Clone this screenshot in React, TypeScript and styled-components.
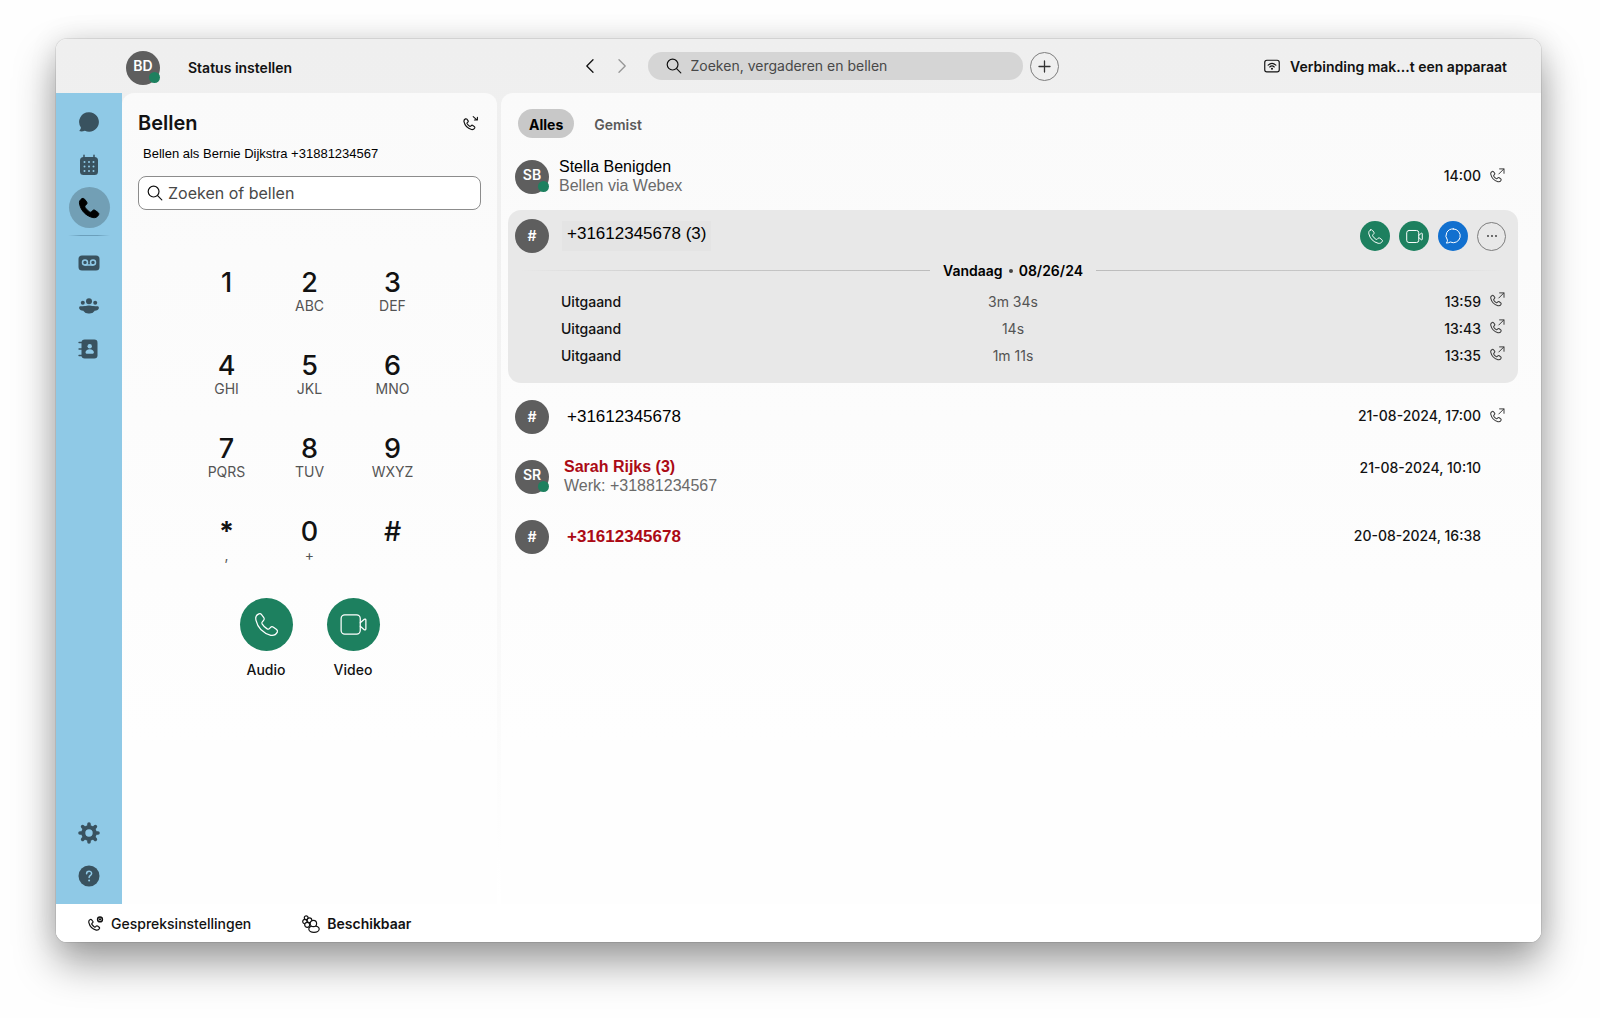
import React, { useState } from 'react';
import styled, { createGlobalStyle, css } from 'styled-components';

const ui = `Inter, "Noto Sans", sans-serif`;
const arial = `"Liberation Sans", Arial, sans-serif`;

const color = {
  ink: '#121212',
  muted: '#545454',
  green: '#1d805f',
  blue: '#1170cf',
  red: '#ab0a15',
  avatar: '#5e5e5e',
  rail: '#8fc9e6',
  railIcon: '#39525f',
};

const GlobalStyle = createGlobalStyle`
  *, *::before, *::after { box-sizing: border-box; }
  body { margin: 0; background: #fefefe; font-family: ${ui}; color: ${color.ink}; }
  button { font: inherit; color: inherit; background: none; border: 0; padding: 0; cursor: pointer; }
  a { color: inherit; text-decoration: none; }
  h1, p, ul { margin: 0; padding: 0; }
  ul { list-style: none; }
  svg { display: block; flex: none; }
`;

/* ---------- layout ---------- */

const Page = styled.div`
  min-height: 100vh;
  padding: 39px 59px 76px 56px;
  display: flex;
`;

const Window = styled.div`
  flex: 1;
  min-width: 0;
  display: flex;
  flex-direction: column;
  border-radius: 11px;
  overflow: hidden;
  background: linear-gradient(#efefef 0, #f0f0f0 200px, #ffffff 860px);
  box-shadow: 0 0 0 1px rgba(0, 0, 0, 0.08), 0 21px 42px rgba(0, 0, 0, 0.38), 0 0 28px rgba(0, 0, 0, 0.1);
`;

const TopBar = styled.header`
  height: 54px;
  display: grid;
  grid-template-columns: minmax(0, 1fr) auto minmax(0, 1fr);
  align-items: center;
  padding: 0 34px 0 70px;
`;

const Body = styled.div`
  flex: 1;
  display: flex;
`;

const Rail = styled.nav`
  width: 66px;
  padding: 8px 0 6px;
  display: flex;
  flex-direction: column;
  align-items: center;
  background: ${color.rail};
`;

const panel = css`
  background: linear-gradient(#fafafa, #fefefe 80%);
`;

const DialPanel = styled.section`
  ${panel}
  flex: none;
  width: 375px;
  padding: 16px 16px 24px;
  border-radius: 12px 12px 0 0;
`;

const HistoryPanel = styled.main`
  ${panel}
  flex: 1;
  min-width: 0;
  margin-left: 4px;
  padding: 16px 23px 24px 7px;
  border-radius: 12px 0 0 0;
`;

const Footer = styled.footer`
  height: 38px;
  padding: 2px 32px 0;
  display: flex;
  align-items: center;
  gap: 51px;
  background: #fff;
`;

/* ---------- shared parts ---------- */

const Presence = styled.span`
  position: absolute;
  right: 0;
  bottom: 2px;
  width: 11px;
  height: 11px;
  border-radius: 50%;
  background: ${color.green};
`;

const AvatarCircle = styled.span`
  position: relative;
  flex: none;
  width: 34px;
  height: 34px;
  border-radius: 50%;
  display: grid;
  place-items: center;
  background: ${color.avatar};
  color: #fff;
  font-family: ${ui};
  font-size: 14px;
  line-height: 16px;
  font-weight: 600;
`;

const Initials = styled.span<{ $raised?: boolean }>`
  padding-bottom: ${p => (p.$raised ? 4 : 0)}px;
`;

function Avatar({ text, online }: { text: string; online?: boolean }) {
  return (
    <AvatarCircle>
      <Initials $raised={online}>{text}</Initials>
      {online && <Presence />}
    </AvatarCircle>
  );
}

const Round = styled.button<{ $size: number; $bg?: string }>`
  flex: none;
  width: ${p => p.$size}px;
  height: ${p => p.$size}px;
  border-radius: 50%;
  display: grid;
  place-items: center;
  background: ${p => p.$bg ?? 'transparent'};
  color: ${p => (p.$bg ? '#fff' : '#333')};
  border: ${p => (p.$bg ? '0' : '1px solid #7d7d7d')};
`;

/* ---------- top bar ---------- */

const Profile = styled.div`
  display: flex;
  align-items: center;
  gap: 28px;
  padding-top: 4px;
`;

const TopText = styled.button`
  font-size: 14px;
  line-height: 20px;
  font-weight: 600;
  white-space: nowrap;
`;

const CenterTools = styled.div`
  margin-left: 5px;
  display: flex;
  align-items: center;
`;

const Chevrons = styled.div`
  display: flex;
  gap: 12px;
  margin-right: 16px;
`;

const ChevronButton = styled.button`
  width: 20px;
  height: 20px;
  display: grid;
  place-items: center;
  &:disabled { opacity: 0.4; }
`;

const GlobalSearch = styled.label`
  width: 375px;
  height: 28px;
  margin-right: 7px;
  padding: 0 18px;
  display: flex;
  align-items: center;
  gap: 9px;
  border-radius: 14px;
  background: #d5d5d5;
`;

const SearchInput = styled.input<{ $size: number }>`
  flex: 1;
  min-width: 0;
  padding: 0;
  border: 0;
  outline: 0;
  background: transparent;
  font-family: ${ui};
  font-size: ${p => p.$size}px;
  line-height: 20px;
  color: ${color.ink};
  &::placeholder { color: #484848; opacity: 1; }
`;

const Device = styled.div`
  display: flex;
  justify-content: flex-end;
  align-items: center;
  gap: 10px;
  padding-top: 2px;
`;

/* ---------- rail ---------- */

const RailLink = styled.a<{ $active?: boolean }>`
  width: 41px;
  height: 41px;
  margin-bottom: 2px;
  display: grid;
  place-items: center;
  border-radius: 50%;
  color: ${p => (p.$active ? '#000' : color.railIcon)};
  background: ${p => (p.$active ? '#729fb5' : 'transparent')};
`;

const RailDivider = styled.hr`
  width: 42px;
  height: 1px;
  margin: 5px 0 6px;
  border: 0;
  background: linear-gradient(90deg, transparent, #6b9fbb 30%, #6b9fbb 70%, transparent);
`;

const RailSpacer = styled.div`
  flex: 1;
`;

/* ---------- dial panel ---------- */

const DialHead = styled.div`
  display: flex;
  align-items: center;
  justify-content: space-between;
  padding-right: 2px;
  height: 28px;
`;

const Title = styled.h1`
  font-size: 20px;
  line-height: 28px;
  font-weight: 600;
`;

const CallerLine = styled.p`
  margin: 8px 0 13px 5px;
  font-family: ${arial};
  font-size: 13px;
  line-height: 18px;
  color: #000;
`;

const DialSearch = styled.label`
  height: 34px;
  padding: 0 8px;
  display: flex;
  align-items: center;
  gap: 5px;
  border: 1px solid #8c8c8c;
  border-radius: 8px;
  background: #fff;
`;

const Keypad = styled.div`
  margin-top: 51px;
  display: grid;
  grid-template-columns: repeat(3, 83px);
  grid-auto-rows: 83px;
  justify-content: center;
`;

const Key = styled.button`
  display: flex;
  flex-direction: column;
  align-items: center;
`;

const Digit = styled.span<{ $heavy: boolean }>`
  font-size: 27px;
  line-height: 43px;
  font-weight: ${p => (p.$heavy ? 700 : 500)};
`;

const Letters = styled.span`
  font-size: 14px;
  line-height: 4px;
  color: ${color.muted};
`;

const CallButtons = styled.div`
  margin-top: 5px;
  display: flex;
  justify-content: center;
  gap: 34px;
`;

const CallChoice = styled.div`
  width: 53px;
  display: flex;
  flex-direction: column;
  align-items: center;
  gap: 9px;
  font-size: 14px;
  line-height: 20px;
  font-weight: 500;
`;

/* ---------- history ---------- */

const Tabs = styled.div`
  display: flex;
  gap: 9px;
  padding-left: 10px;
  margin-bottom: 9px;
`;

const Tab = styled.button<{ $on: boolean }>`
  height: 29px;
  padding: 1px 11px 0;
  border-radius: 15px;
  font-size: 14px;
  font-weight: ${p => (p.$on ? 700 : 600)};
  color: ${p => (p.$on ? '#000' : '#595959')};
  background: ${p => (p.$on ? '#c8c8c8' : 'transparent')};
`;

const CallList = styled.ul`
  display: flex;
  flex-direction: column;
`;

const CallRow = styled.li`
  height: 60px;
  padding: 0 13px 0 7px;
  display: flex;
  align-items: center;
  font-family: ${arial};
`;

const Who = styled.div<{ $number?: boolean; $missed?: boolean }>`
  flex: 1;
  min-width: 0;
  margin-left: ${p => (p.$number ? 18 : p.$missed ? 15 : 10)}px;
  padding-bottom: 2px;
  font-size: ${p => (p.$number ? 17 : 16)}px;
  line-height: 19px;
  color: ${p => (p.$missed ? color.red : '#000')};
  font-weight: ${p => (p.$missed ? 700 : 400)};
`;

const Detail = styled.p`
  color: #6a6a6a;
  font-size: 16px;
  line-height: 19px;
  font-weight: 400;
`;

const When = styled.time<{ $raised?: boolean }>`
  width: 180px;
  text-align: right;
  font-family: ${ui};
  font-size: 14px;
  line-height: 20px;
  font-weight: 500;
  white-space: nowrap;
  padding-bottom: ${p => (p.$raised ? 19 : 2)}px;
`;

const Direction = styled.span`
  width: 24px;
  padding: 0 0 4px 9px;
  color: #3c3c3c;
`;

const OpenCard = styled.li`
  margin: 3px 0 4px;
  height: 173px;
  border-radius: 13px;
  background: #e8e8e8;
`;

const CardHead = styled.div`
  height: 52px;
  padding: 0 12px 0 7px;
  display: flex;
  align-items: center;
  font-family: ${arial};
`;

const NumberChip = styled.div`
  margin-left: 13px;
  padding: 3px 5px 8px;
  font-size: 17px;
  line-height: 19px;
  color: #000;
  background: #e4e4e4;
`;

const Actions = styled.div`
  flex: 1;
  display: flex;
  justify-content: flex-end;
  align-items: center;
  gap: 9px;
`;

const DayDivider = styled.div`
  height: 17px;
  padding: 0 13px;
  display: flex;
  align-items: center;
  gap: 13px;
  font-size: 14px;
  line-height: 17px;
  font-weight: 600;
  color: #000;
`;

const DayLabel = styled.span`
  display: flex;
  align-items: center;
  gap: 6px;
`;

const Dot = styled.span`
  width: 4px;
  height: 4px;
  border-radius: 50%;
  background: #444;
`;

const Line = styled.span<{ $to: string }>`
  flex: 1;
  height: 1px;
  background: linear-gradient(to ${p => p.$to}, #bcbcbc, #c8c8c8 60%, transparent);
`;

const CallTable = styled.table`
  width: 100%;
  margin-top: 9px;
  table-layout: fixed;
  border-collapse: collapse;
  font-size: 14px;
  line-height: 20px;
  tr { height: 27px; }
  td { padding: 0; font-weight: 500; }
  td:first-child { padding-left: 53px; }
  td:nth-child(2) { text-align: center; font-weight: 400; color: ${color.muted}; }
  td:last-child { padding-right: 13px; }
`;

const TimeCell = styled.div`
  display: flex;
  justify-content: flex-end;
  align-items: center;
`;

/* ---------- footer ---------- */

const FooterButton = styled.button<{ $bold?: boolean }>`
  display: flex;
  align-items: center;
  gap: 7px;
  font-size: 14px;
  line-height: 20px;
  font-weight: ${p => (p.$bold ? 600 : 500)};
`;

/* ---------- icons ---------- */

const handset =
  'M5.2 2.6C3 3.5 2 5.5 2.6 8.2 4.2 15 9 19.8 15.8 21.6c2.7.4 4.7-.6 5.8-2.8.4-1 .2-1.6-.6-2.3l-2.8-2.1c-.9-.6-1.9-.6-2.6.2l-1 1.1c-.6.6-1.3.6-2 .2-1.8-1.1-3.4-2.7-4.5-4.5-.4-.7-.3-1.4.3-2l1-1c.8-.7.8-1.7.2-2.6L7.6 3.2C7 2.4 6.2 2.2 5.2 2.6Z';

type SvgProps = { size: number; stroke?: number; box?: string; children: React.ReactNode };

function Icon({ size, stroke = 1, box = '0 0 24 24', children }: SvgProps) {
  return (
    <svg width={size} height={size} viewBox={box} fill="none" stroke="currentColor" strokeWidth={stroke} strokeLinecap="round" strokeLinejoin="round" aria-hidden="true">
      {children}
    </svg>
  );
}

const PhoneIcon = ({ size, stroke }: { size: number; stroke: number }) => (
  <Icon size={size} stroke={stroke}><path d={handset} /></Icon>
);

const VideoIcon = ({ size, stroke }: { size: number; stroke: number }) => (
  <Icon size={size} stroke={stroke}>
    <rect x="1" y="3.5" width="17" height="17" rx="3.2" />
    <path d="M18 10.5 21.6 7.4c.6-.5 1.4-.1 1.4.6v8c0 .7-.8 1.1-1.4.6L18 13.5" />
  </Icon>
);

const SearchIcon = ({ size }: { size: number }) => (
  <Icon size={size} box="0 0 16 16" stroke={1.2}>
    <circle cx="6.6" cy="6.6" r="5.4" /><path d="m10.6 10.6 4.2 4.2" />
  </Icon>
);

const OutgoingIcon = () => (
  <Icon size={15} box="0 0 15 15" stroke={1}>
    <g transform="translate(-.6 2) scale(.54)" strokeWidth="1.9"><path d={handset} /></g>
    <path d="M8.8 6 13.8 1M9.6.9H14v4.4" />
  </Icon>
);

const PullIcon = () => (
  <Icon size={16} box="0 0 16 16" stroke={1.1}>
    <g transform="translate(-.4 2.4) scale(.56)" strokeWidth="2.1"><path d={handset} /></g>
    <path d="M10.200 1.600 13.600 4.600M14.400 2.200v2.800H11.400" />
  </Icon>
);

const CallSettingsIcon = () => (
  <Icon size={16} box="0 0 16 16" stroke={1.1}>
    <g transform="translate(-.6 2) scale(.56)" strokeWidth="2.1"><path d={handset} /></g>
    <circle cx="12" cy="3.4" r="2.4" strokeWidth="1.5" /><circle cx="12" cy="3.4" r=".6" fill="currentColor" />
  </Icon>
);

const GroupIcon = () => (
  <Icon size={18} box="0 0 18 18" stroke={1.2}>
    <circle cx="2.9" cy="6.600" r="2.2" />
    <circle cx="4.2" cy="2.700" r="1.9" fill="#fff" />
    <circle cx="5.2" cy="9.800" r="2.5" fill="#fff" />
    <circle cx="7.5" cy="5.200" r="2.3" fill="#fff" />
    <ellipse cx="12" cy="14.100" rx="5.200" ry="3.300" fill="#fff" />
    <circle cx="11.400" cy="8.500" r="3.200" fill="#fff" />
  </Icon>
);

const DeviceIcon = () => (
  <Icon size={16} box="0 0 15 15" stroke={1.1}>
    <rect x=".7" y="1.2" width="13.6" height="10.8" rx="2" />
    <path d="M3.9 5.8c2.1-1.9 5.1-1.9 7.2 0M5.4 7.5c1.2-1.1 3-1.1 4.2 0" />
    <circle cx="7.5" cy="9.2" r=".4" fill="currentColor" />
  </Icon>
);

const ChatBubble = () => (
  <Icon size={20} box="0 0 20 20">
    <path d="M10.2.3a9.7 9.7 0 1 1-4.3 18.4c-1.7.7-3.5.9-5 .6-.5-.1-.6-.7-.2-1 .8-.8 1.200-1.800 1.200-2.800A9.700 9.700 0 0 1 10.2.3Z" fill="currentColor" stroke="none" />
  </Icon>
);

const CalendarIcon = () => (
  <Icon size={22} box="0 0 22 22">
    <rect x="2" y="3" width="18" height="18" rx="3.5" fill="currentColor" stroke="none" />
    <path d="M6 1.300v3M16 1.300v3" strokeWidth="1.5" />
    {[8, 12.5, 17].map(y => [6.5, 11, 15.5].map(x => <circle key={`${x}-${y}`} cx={x} cy={y} r="1" fill={color.rail} stroke="none" />))}
  </Icon>
);

const VoicemailIcon = () => (
  <Icon size={22} box="0 0 22 22">
    <rect x=".5" y="3.5" width="21" height="15" rx="3.5" fill="currentColor" stroke="none" />
    <g stroke={color.rail} strokeWidth="1.500"><circle cx="7" cy="10.500" r="2.500" /><circle cx="15" cy="10.500" r="2.500" /><path d="M7 13h8" /></g>
  </Icon>
);

const TeamsIcon = () => (
  <Icon size={20} box="0 0 20 20">
    <g fill="currentColor" stroke="none">
      <circle cx="10" cy="5.200" r="3" /><circle cx="3.800" cy="6.700" r="2" /><circle cx="16.200" cy="6.700" r="2" />
      <path d="M4.700 10.300h10.600c1 0 .8 5.700-5.300 6.900-6.100-1.200-6.300-6.900-5.300-6.900Z" />
      <path d="M1.200 10.300h17.600c1.200.2 1.300 1.600.7 2.700-.8 1.300-2.400 1.800-4.200 1.600H4.700C2.900 14.800 1.300 14.300.5 13c-.6-1.100-.5-2.500.7-2.700Z" />
      <ellipse cx="10" cy="13.500" rx="6" ry="4" />
    </g>
  </Icon>
);

const ContactsIcon = () => (
  <Icon size={22} box="0 0 22 22">
    <rect x="3.500" y="1.500" width="16" height="19" rx="3.200" fill="currentColor" stroke="none" />
    <path d="M1 4.500h4M1 11h4M1 17.500h4" strokeWidth="1.300" />
    <g fill={color.rail} stroke="none"><circle cx="11.700" cy="8.200" r="2.200" /><path d="M11.700 11.200c2.500 0 4.200 1.400 4.200 3.100 0 1.200-.8 1.500-2 1.500H9.500c-1.200 0-2-.3-2-1.500 0-1.700 1.700-3.100 4.200-3.100Z" /></g>
  </Icon>
);

const GearIcon = () => (
  <Icon size={22} box="-11 -11 22 22">
    {[0, 45, 90, 135].map(a => <path key={a} d="M0-9V-6M0 6v3" strokeWidth="3.600" transform={`rotate(${a})`} />)}
    <circle r="5.700" strokeWidth="4" />
  </Icon>
);

const HelpIcon = () => (
  <Icon size={22} box="0 0 22 22">
    <circle cx="11" cy="11" r="10.500" fill="currentColor" stroke="none" />
    <path d="M8.600 8.700c0-3.400 5-3.200 5-.3 0 2-2.500 2-2.500 4.200" stroke={color.rail} strokeWidth="1.500" />
    <circle cx="11.100" cy="15.400" r="1" fill={color.rail} stroke="none" />
  </Icon>
);

const MessageIcon = () => (
  <Icon size={16} box="0 0 16 16" stroke={1}>
    <path d="M8.300.9a6.900 6.900 0 1 1-3 13.100c-1.300.7-2.700 1.100-4.200 1 1-.9 1.500-1.900 1.300-3A6.900 6.900 0 0 1 8.300.9Z" />
  </Icon>
);

/* ---------- data ---------- */

const keys = [
  ['1', ''], ['2', 'ABC'], ['3', 'DEF'],
  ['4', 'GHI'], ['5', 'JKL'], ['6', 'MNO'],
  ['7', 'PQRS'], ['8', 'TUV'], ['9', 'WXYZ'],
  ['*', ','], ['0', '+'], ['#', ''],
];

const outgoing = [
  ['3m 34s', '13:59'],
  ['14s', '13:43'],
  ['1m 11s', '13:35'],
];

type Call = { avatar: string; name: string; detail?: string; when: string; missed?: boolean };

const olderCalls: Call[] = [
  { avatar: '#', name: '+31612345678', when: '21-08-2024, 17:00' },
  { avatar: 'SR', name: 'Sarah Rijks (3)', detail: 'Werk: +31881234567', when: '21-08-2024, 10:10', missed: true },
  { avatar: '#', name: '+31612345678', when: '20-08-2024, 16:38', missed: true },
];

function CallItem({ avatar, name, detail, when, missed }: Call) {
  const isNumber = avatar === '#';
  return (
    <CallRow>
      <Avatar text={avatar} online={!isNumber} />
      <Who $number={isNumber} $missed={missed}>
        {name}
        {detail && <Detail>{detail}</Detail>}
      </Who>
      <When $raised={missed && !isNumber}>{when}</When>
      <Direction>{!missed && <OutgoingIcon />}</Direction>
    </CallRow>
  );
}

export default function App() {
  const [tab, setTab] = useState('Alles');
  return (
    <>
      <GlobalStyle />
      <Page>
        <Window>
          <TopBar>
            <Profile>
              <Avatar text="BD" online />
              <TopText>Status instellen</TopText>
            </Profile>
            <CenterTools>
              <Chevrons>
                <ChevronButton aria-label="Terug"><Icon size={16} box="0 0 16 16" stroke={1.3}><path d="M11 1.800 4.800 8l6.200 6.200" /></Icon></ChevronButton>
                <ChevronButton aria-label="Vooruit" disabled><Icon size={16} box="0 0 16 16" stroke={1.3}><path d="M5 1.800 11.200 8 5 14.200" /></Icon></ChevronButton>
              </Chevrons>
              <GlobalSearch>
                <SearchIcon size={16} />
                <SearchInput $size={14} placeholder="Zoeken, vergaderen en bellen" aria-label="Zoeken, vergaderen en bellen" />
              </GlobalSearch>
              <Round $size={29} aria-label="Nieuw"><Icon size={13} box="0 0 13 13" stroke={1.3}><path d="M6.500 1v11M1 6.500h11" /></Icon></Round>
            </CenterTools>
            <Device><DeviceIcon /><TopText>Verbinding mak...t een apparaat</TopText></Device>
          </TopBar>

          <Body>
            <Rail aria-label="Navigatie">
              <RailLink href="#chat" aria-label="Berichten"><ChatBubble /></RailLink>
              <RailLink href="#agenda" aria-label="Agenda"><CalendarIcon /></RailLink>
              <RailLink href="#bellen" aria-label="Bellen" $active><Icon size={24}><path d={handset} fill="currentColor" /></Icon></RailLink>
              <RailDivider />
              <RailLink href="#voicemail" aria-label="Voicemail"><VoicemailIcon /></RailLink>
              <RailLink href="#teams" aria-label="Teams"><TeamsIcon /></RailLink>
              <RailLink href="#contacten" aria-label="Contacten"><ContactsIcon /></RailLink>
              <RailSpacer />
              <RailLink href="#instellingen" aria-label="Instellingen"><GearIcon /></RailLink>
              <RailLink href="#help" aria-label="Help"><HelpIcon /></RailLink>
            </Rail>

            <DialPanel>
              <DialHead>
                <Title>Bellen</Title>
                <button aria-label="Gesprek overnemen"><PullIcon /></button>
              </DialHead>
              <CallerLine>Bellen als Bernie Dijkstra +31881234567</CallerLine>
              <DialSearch>
                <SearchIcon size={16} />
                <SearchInput $size={16} placeholder="Zoeken of bellen" aria-label="Zoeken of bellen" />
              </DialSearch>
              <Keypad>
                {keys.map(([digit, letters]) => (
                  <Key key={digit}><Digit $heavy={digit === '*'}>{digit}</Digit><Letters>{letters}</Letters></Key>
                ))}
              </Keypad>
              <CallButtons>
                <CallChoice>
                  <Round $size={53} $bg={color.green} aria-label="Audio"><PhoneIcon size={27} stroke={1.1} /></Round>
                  Audio
                </CallChoice>
                <CallChoice>
                  <Round $size={53} $bg={color.green} aria-label="Video"><VideoIcon size={27} stroke={1.1} /></Round>
                  Video
                </CallChoice>
              </CallButtons>
            </DialPanel>

            <HistoryPanel>
              <Tabs>
                {['Alles', 'Gemist'].map(name => (
                  <Tab key={name} $on={tab === name} aria-pressed={tab === name} onClick={() => setTab(name)}>{name}</Tab>
                ))}
              </Tabs>
              <CallList>
                <CallItem avatar="SB" name="Stella Benigden" detail="Bellen via Webex" when="14:00" />
                <OpenCard>
                  <CardHead>
                    <Avatar text="#" />
                    <NumberChip>+31612345678 (3)</NumberChip>
                    <Actions>
                      <Round $size={30} $bg={color.green} aria-label="Audio"><PhoneIcon size={17} stroke={1.4} /></Round>
                      <Round $size={30} $bg={color.green} aria-label="Video"><VideoIcon size={17} stroke={1.4} /></Round>
                      <Round $size={30} $bg={color.blue} aria-label="Bericht"><MessageIcon /></Round>
                      <Round $size={29} aria-label="Meer"><Icon size={12} box="0 0 12 12"><g fill="currentColor" stroke="none"><circle cx="2" cy="6" r=".9" /><circle cx="6" cy="6" r=".9" /><circle cx="10" cy="6" r=".9" /></g></Icon></Round>
                    </Actions>
                  </CardHead>
                  <DayDivider><Line $to="left" /><DayLabel>Vandaag<Dot />08/26/24</DayLabel><Line $to="right" /></DayDivider>
                  <CallTable>
                    <tbody>
                      {outgoing.map(([length, time]) => (
                        <tr key={time}>
                          <td>Uitgaand</td>
                          <td>{length}</td>
                          <td><TimeCell>{time}<Direction><OutgoingIcon /></Direction></TimeCell></td>
                        </tr>
                      ))}
                    </tbody>
                  </CallTable>
                </OpenCard>
                {olderCalls.map(call => <CallItem key={call.when} {...call} />)}
              </CallList>
            </HistoryPanel>
          </Body>

          <Footer>
            <FooterButton><CallSettingsIcon />Gespreksinstellingen</FooterButton>
            <FooterButton $bold><GroupIcon />Beschikbaar</FooterButton>
          </Footer>
        </Window>
      </Page>
    </>
  );
}
